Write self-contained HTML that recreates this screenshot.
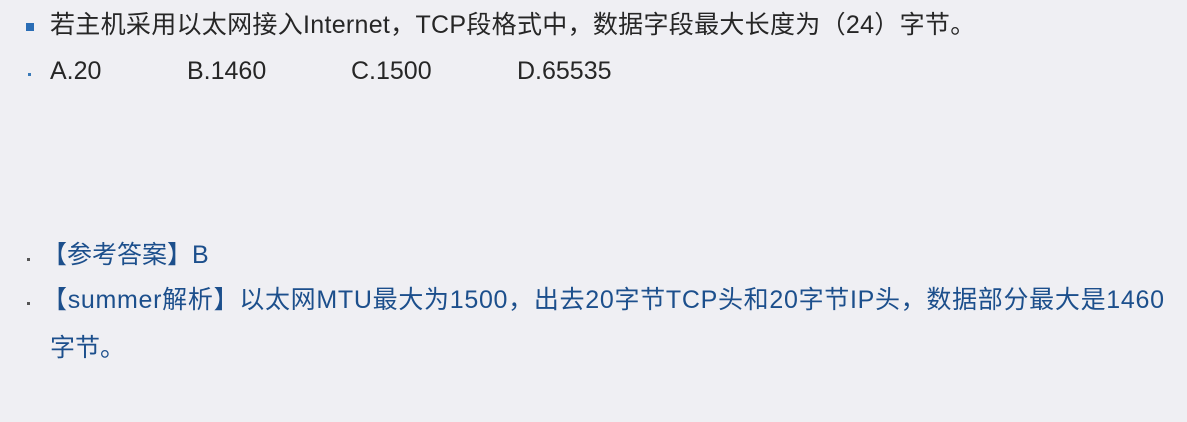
<!DOCTYPE html>
<html><head><meta charset="utf-8"><style>
html,body{margin:0;padding:0;width:1187px;height:422px;background:#efeff3;overflow:hidden}
body{font-family:"Liberation Sans","Noto Sans CJK SC",sans-serif;font-size:25px;color:#262626;position:relative}
.l{position:absolute;left:50px;white-space:nowrap;line-height:30px}
.b{position:absolute;background:#2a6db5}
.blue{color:#1c4f8c}
</style></head><body>
<div class="b" style="left:26px;top:23px;width:8px;height:8px"></div>
<div class="l" style="top:10px;letter-spacing:0.3px">若主机采用以太网接入Internet，TCP段格式中，数据字段最大长度为（24）字节。</div>
<div class="b" style="left:28px;top:73px;width:3px;height:3px;background:#3a7ab8"></div>
<div class="l" style="top:56px">A.20</div>
<div class="l" style="top:56px;left:187px">B.1460</div>
<div class="l" style="top:56px;left:351px">C.1500</div>
<div class="l" style="top:56px;left:517px">D.65535</div>
<div class="b" style="left:27px;top:258px;width:3px;height:3px;background:#555"></div>
<div class="l blue" style="top:240px;left:42px">【参考答案】B</div>
<div class="b" style="left:27px;top:302px;width:3px;height:3px;background:#555"></div>
<div class="l blue" style="top:285px;left:42px;letter-spacing:0.7px">【summer解析】以太网MTU最大为1500，出去20字节TCP头和20字节IP头，数据部分最大是1460</div>
<div class="l blue" style="top:333px">字节。</div>
</body></html>
